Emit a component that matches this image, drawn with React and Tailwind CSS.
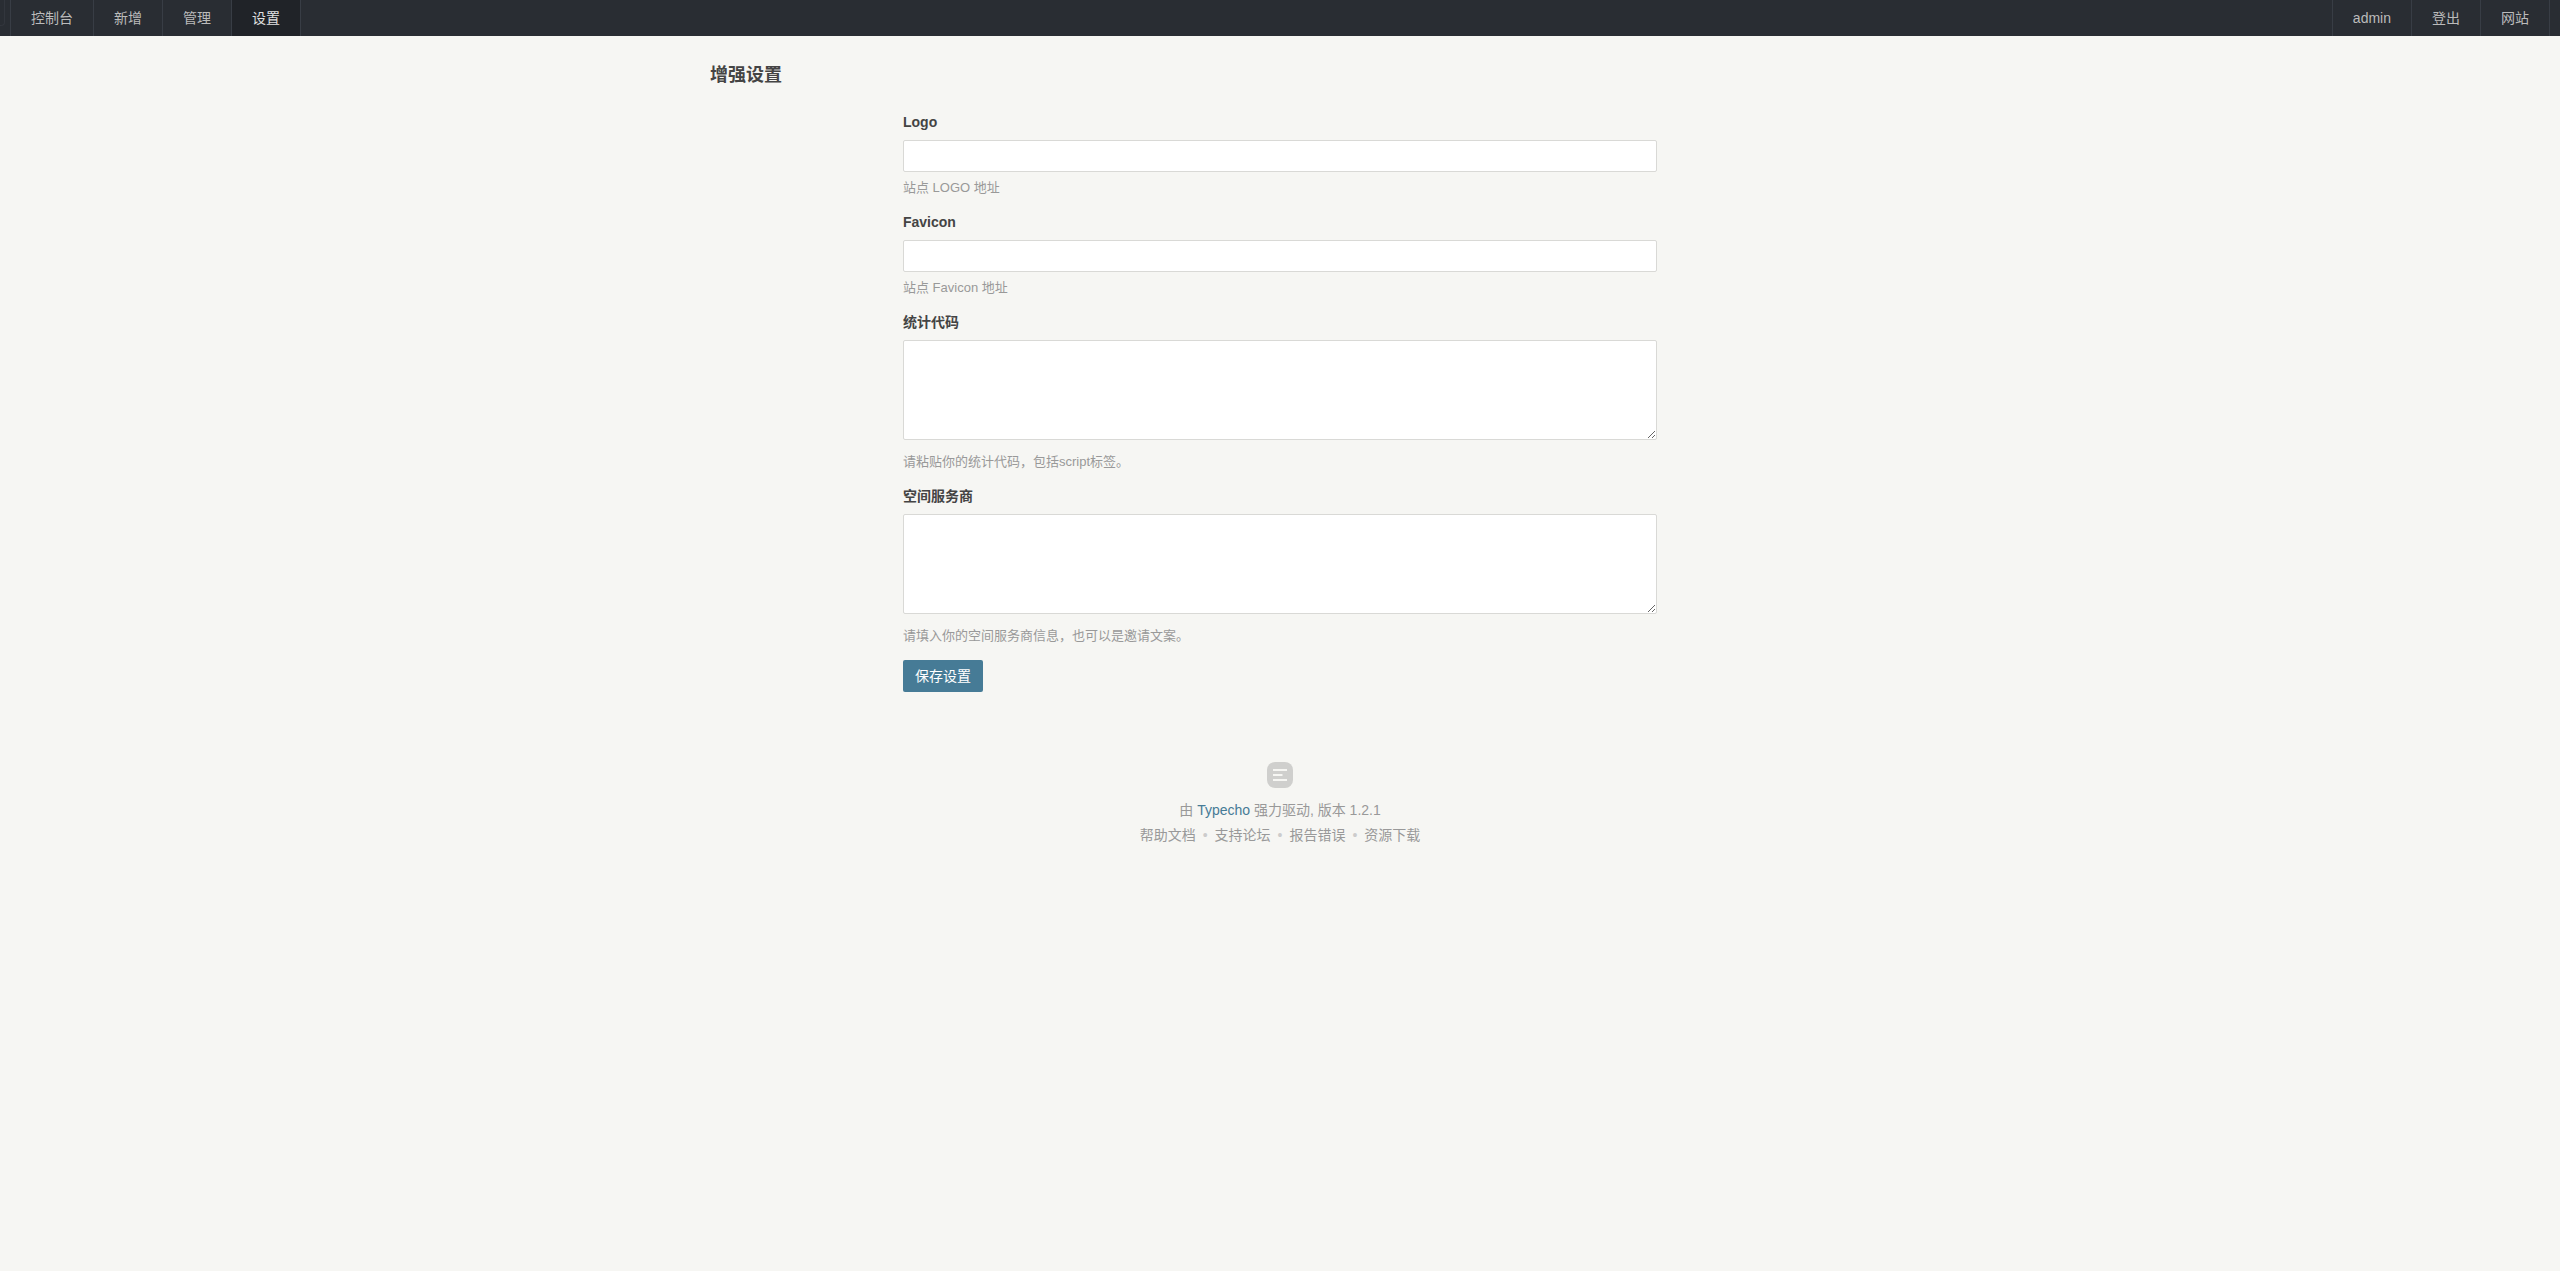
import React from 'react';

const FONT = "font-['Liberation_Sans','Noto_Sans_CJK_SC',sans-serif]";

const leftNav = ['控制台', '新增', '管理', '设置'];
const rightNav = ['admin', '登出', '网站'];
const footerLinks = ['帮助文档', '支持论坛', '报告错误', '资源下载'];

const NavItem = ({ label, active }) => (
  <a className={`flex h-9 items-center border-r border-[#383d45] px-5 text-sm ${active ? 'bg-[#202328] text-[#e0e0e0]' : 'text-[#bbbbbb]'}`}>
    {label}
  </a>
);

const Field = ({ label, desc, multi }) => (
  <div className="pb-[11px]">
    <label className="block h-[31px] pt-[3px] text-sm leading-5 font-bold text-[#444444]">{label}</label>
    {multi ? (
      <textarea className="block h-[100px] w-full rounded-[2px] border border-[#d9d9d6] bg-white" />
    ) : (
      <input type="text" className="block h-8 w-full rounded-[2px] border border-[#d9d9d6] bg-white" />
    )}
    <p className={`text-[13px] leading-5 text-[#999999] ${multi ? 'mt-3' : 'mt-[6px]'}`}>{desc}</p>
  </div>
);

export default function App() {
  return (
    <div className={`${FONT} min-h-[1271px] bg-[#f6f6f3] text-sm text-[#444444]`}>
      <nav className="flex h-9 justify-between bg-[#292d33]">
        <div className="flex">
          {/* logo stub, mostly cut off at the left edge */}
          <div className="mr-[5px] h-[26px] w-[5px] rounded-br-[4px] border-r border-b border-[#32363d]" />
          <div className="flex border-l border-[#383d45]">
            {leftNav.map((item) => (
              <NavItem key={item} label={item} active={item === '设置'} />
            ))}
          </div>
        </div>
        <div className="mr-[10px] flex border-l border-[#383d45]">
          {rightNav.map((item) => (
            <NavItem key={item} label={item} />
          ))}
        </div>
      </nav>

      <main className="mx-auto w-[1140px]">
        <h2 className="mt-[25px] mb-5 text-lg leading-7 font-bold text-[#444444]">增强设置</h2>
        <form className="mx-auto w-[754px]">
          <Field label="Logo" desc="站点 LOGO 地址" />
          <Field label="Favicon" desc="站点 Favicon 地址" />
          <Field label="统计代码" desc="请粘贴你的统计代码，包括script标签。" multi />
          <Field label="空间服务商" desc="请填入你的空间服务商信息，也可以是邀请文案。" multi />
          <button type="button" className="mt-[3px] block h-8 w-20 rounded-[2px] bg-[#467b96] text-sm text-white">
            保存设置
          </button>
        </form>
      </main>

      <footer className="mt-[70px] flex flex-col items-center text-[#999999]">
        <svg width="26" height="26" viewBox="0 0 26 26">
          <rect width="26" height="26" rx="8" fill="#cfcfcd" />
          <path d="M6 7h14v2H6zM6 12h9.5v2H6zM6 17h14v2H6z" fill="#f6f6f3" />
        </svg>
        <p className="mt-[10px] leading-[25px]">
          由 <a className="text-[#467b96]">Typecho</a> 强力驱动, 版本 1.2.1
        </p>
        <p className="leading-[25px]">
          {footerLinks.map((link, i) => (
            <span key={link}>
              {i > 0 && <span className="px-[7px] text-[#cccccc]">•</span>}
              {link}
            </span>
          ))}
        </p>
      </footer>
    </div>
  );
}
